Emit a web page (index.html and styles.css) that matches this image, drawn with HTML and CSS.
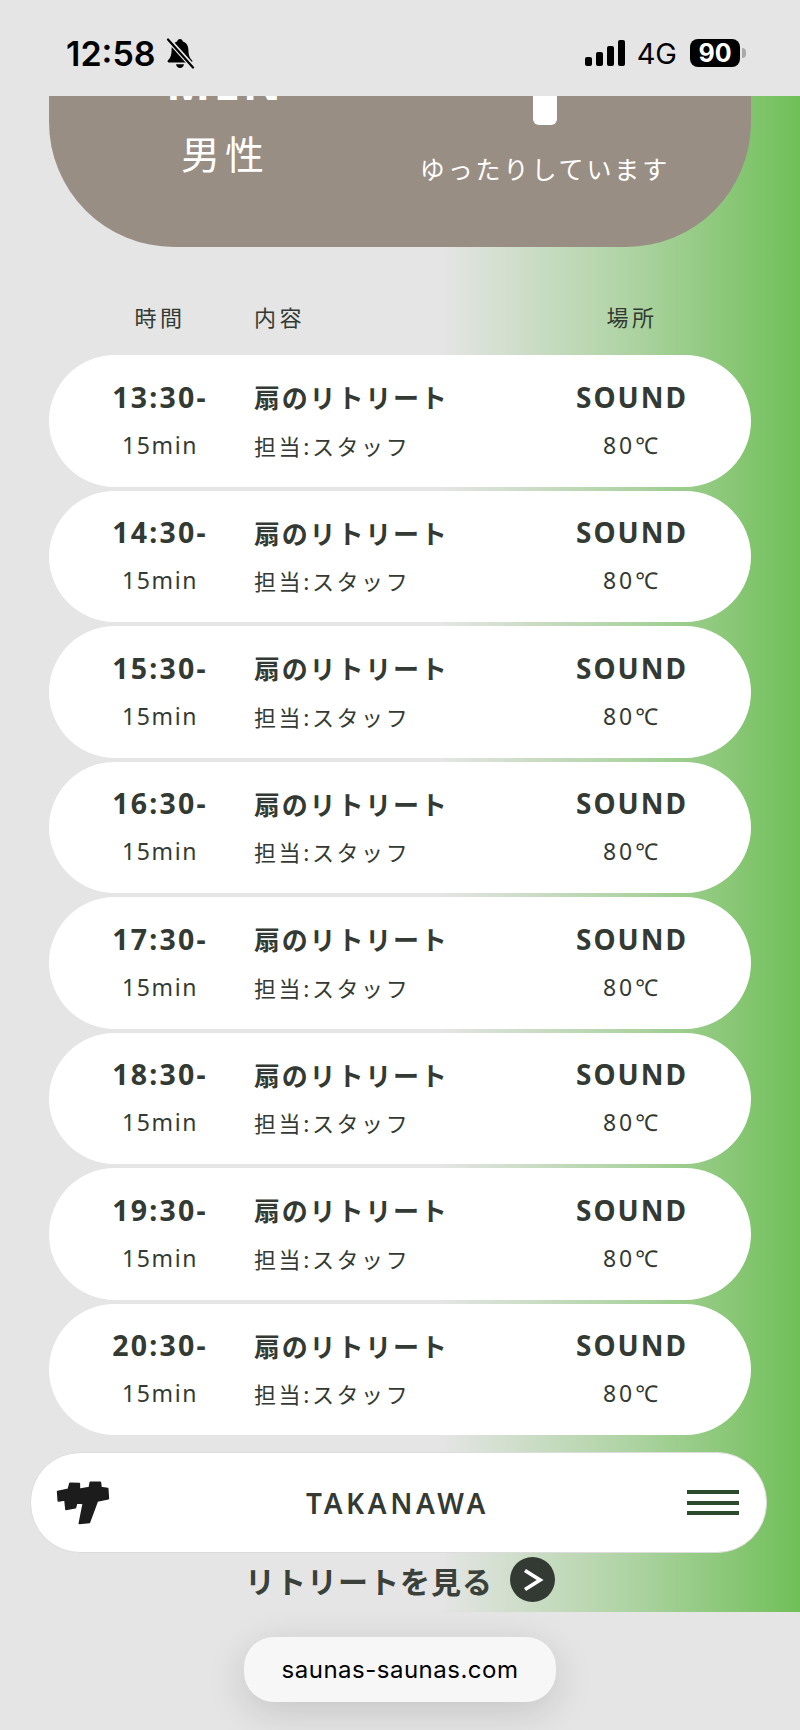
FILE: index.html
```html
<!DOCTYPE html>
<html lang="ja">
<head>
<meta charset="utf-8">
<title>TAKANAWA</title>
<link rel="stylesheet" href="styles.css">
</head>
<body>
<header class="status">
  <div class="status-left">
    <span class="clock">12:58</span>
    <svg class="bell" width="30" height="32" viewBox="0 0 30 32"><path fill="#000" d="M15 2c-1.6 0-2.6 1-2.8 2.5C8.6 5.6 6.6 8.800 6.600 13c0 4.500-.8 7.500-3.600 10.300-.9 1-.3 2.200 1 2.200h22c1.300 0 1.900-1.200 1-2.200C24.200 20.500 23.400 17.500 23.400 13c0-4.200-2-7.400-5.600-8.500C17.600 3 16.600 2 15 2z"/><path fill="#000" d="M11 27.300h8c-.3 2.200-2 3.700-4 3.700s-3.700-1.500-4-3.700z"/><path stroke="#e5e5e5" stroke-width="5" d="M2 1l26 29"/><path stroke="#000" stroke-width="2.200" stroke-linecap="round" d="M3 2.500l25 28"/></svg>
  </div>
  <div class="status-right">
    <svg class="signal" width="40" height="26" viewBox="0 0 40 26"><rect x="0" y="17" width="7" height="9" rx="2"/><rect x="11" y="12" width="7" height="14" rx="2"/><rect x="22" y="6" width="7" height="20" rx="2"/><rect x="33" y="0" width="7" height="26" rx="2"/></svg>
    <span class="net">4G</span>
    <div class="battery"><span class="level">90</span><span class="nub"></span></div>
  </div>
</header>
<main class="page">
  <section class="hero">
    <div class="hero-left">
      <div class="men">MEN</div>
      <div class="jp-men">男性</div>
    </div>
    <div class="hero-right">
      <div class="gauge"></div>
      <div class="status-text">ゆったりしています</div>
    </div>
  </section>
  <div class="columns">
    <span class="c1">時間</span><span class="c2">内容</span><span class="c3">場所</span>
  </div>
  <ul class="rows">
    <li class="row"><span class="time">13:30-</span><span class="title">扇のリトリート</span><span class="place">SOUND</span><span class="dur">15min</span><span class="staff">担当:スタッフ</span><span class="temp">80℃</span></li>
    <li class="row"><span class="time">14:30-</span><span class="title">扇のリトリート</span><span class="place">SOUND</span><span class="dur">15min</span><span class="staff">担当:スタッフ</span><span class="temp">80℃</span></li>
    <li class="row"><span class="time">15:30-</span><span class="title">扇のリトリート</span><span class="place">SOUND</span><span class="dur">15min</span><span class="staff">担当:スタッフ</span><span class="temp">80℃</span></li>
    <li class="row"><span class="time">16:30-</span><span class="title">扇のリトリート</span><span class="place">SOUND</span><span class="dur">15min</span><span class="staff">担当:スタッフ</span><span class="temp">80℃</span></li>
    <li class="row"><span class="time">17:30-</span><span class="title">扇のリトリート</span><span class="place">SOUND</span><span class="dur">15min</span><span class="staff">担当:スタッフ</span><span class="temp">80℃</span></li>
    <li class="row"><span class="time">18:30-</span><span class="title">扇のリトリート</span><span class="place">SOUND</span><span class="dur">15min</span><span class="staff">担当:スタッフ</span><span class="temp">80℃</span></li>
    <li class="row"><span class="time">19:30-</span><span class="title">扇のリトリート</span><span class="place">SOUND</span><span class="dur">15min</span><span class="staff">担当:スタッフ</span><span class="temp">80℃</span></li>
    <li class="row"><span class="time">20:30-</span><span class="title">扇のリトリート</span><span class="place">SOUND</span><span class="dur">15min</span><span class="staff">担当:スタッフ</span><span class="temp">80℃</span></li>
  </ul>
  <nav class="bar">
    <svg class="logo" width="54" height="44" viewBox="48 65 162 132"><path fill="#1c1c1c" stroke="#1c1c1c" stroke-width="5" stroke-linejoin="round" d="M53 97L85 90L90 72L118 73L118 90L148 85L151 69L181 69L183 85L203 88L205 118L172 125L148 189L118 192L130 132L110 131L106 145L78 150L75 122L55 125Z"/></svg>
    <span class="brand">TAKANAWA</span>
    <div class="burger"><span></span><span></span><span></span></div>
  </nav>
  <div class="more">
    <span class="more-text">リトリートを見る</span>
    <span class="more-btn"><svg width="22" height="24" viewBox="0 0 22 24" fill="none" stroke="#fff" stroke-width="3.800"><path d="M3 2.500l15 9.500L3 21.500"/></svg></span>
  </div>
</main>
<footer class="urlbar"><div class="url">saunas-saunas.com</div></footer>
</body>
</html>
```
FILE: styles.css
```css
* { box-sizing: border-box; }
html, body { margin: 0; padding: 0; }
body {
  width: 800px;
  height: 1730px;
  overflow: hidden;
  background: #e5e5e5;
  color: #333a33;
  font-family: "Noto Sans", "Noto Sans CJK JP", sans-serif;
}
.status {
  height: 96px;
  display: flex;
  justify-content: space-between;
  align-items: center;
  padding: 10px 54px 0 66px;
  color: #000;
  font-family: Inter, "Liberation Sans", sans-serif;
}
.status-left, .status-right { display: flex; align-items: center; }
.clock { font-size: 34px; font-weight: 600; }
.bell { margin-left: 9px; }
.signal { fill: #000; margin-right: 12px; }
.net { font-size: 29px; font-weight: 400; margin-right: 13px; }
.battery { display: flex; align-items: center; }
.level {
  width: 50px;
  height: 28px;
  border-radius: 8px;
  background: #000;
  color: #fff;
  font-size: 25px;
  font-weight: 700;
  line-height: 28px;
  text-align: center;
}
.nub { width: 4px; height: 10px; margin-left: 2px; background: #a9a9a9; border-radius: 0 4px 4px 0; }
.page {
  height: 1516px;
  background: linear-gradient(90deg, rgba(112,191,88,0) 55%, rgba(112,191,88,.45) 78%, #70bf58 100%);
  display: flex;
  flex-direction: column;
}
.hero {
  width: 702px;
  height: 151px;
  margin-left: 49px;
  flex: none;
  overflow: hidden;
  display: grid;
  grid-template-columns: 352px 288px;
  grid-template-rows: 151px;
  align-items: end;
  background: #998e84;
  border-radius: 0 0 125px 125px;
  color: #fff;
  font-family: "Noto Sans CJK JP", sans-serif;
}
.hero-left { text-align: center; padding-bottom: 70px; }
.men { font-size: 47px; font-weight: 700; line-height: 46px; letter-spacing: 3px; font-family: "Noto Sans", sans-serif; margin-bottom: 22px; }
.jp-men { font-size: 39px; letter-spacing: 5px; line-height: 50px; }
.hero-right { display: flex; flex-direction: column; align-items: center; padding-bottom: 59px; }
.gauge { width: 24px; height: 60px; background: #fff; border-radius: 6px; margin-bottom: 23px; }
.status-text { font-size: 25px; letter-spacing: 2.900px; line-height: 40px; white-space: nowrap; }
.columns, .row {
  display: grid;
  grid-template-columns: 122px 265px 160px;
  column-gap: 33px;
  padding-left: 50px;
  margin-left: 49px;
  width: 702px;
}
.columns {
  height: 108px;
  flex: none;
  align-items: center;
  font-family: "Noto Sans CJK JP", sans-serif;
  font-size: 22px;
  letter-spacing: 3.500px;
  padding-top: 29px;
}
.c1, .c3 { text-align: center; }
.rows {
  list-style: none;
  margin: 0;
  padding: 0;
  display: flex;
  flex-direction: column;
  gap: 4px;
}
.row {
  height: 131.500px;
  grid-template-rows: 48px 48px;
  align-content: center;
  align-items: center;
  background: #fff;
  border-radius: 66px;
}
.time, .place { font-size: 28.500px; font-weight: 700; letter-spacing: 2.200px; text-align: center; white-space: nowrap; }
.place { font-size: 28px; letter-spacing: 2px; }
.title { font-family: "Noto Sans CJK JP", sans-serif; font-size: 26px; font-weight: 700; letter-spacing: 1.800px; white-space: nowrap; }
.dur, .temp { font-size: 23px; letter-spacing: 1.600px; text-align: center; }
.temp { letter-spacing: 3px; }
.staff { font-family: "Noto Sans CJK JP", sans-serif; font-size: 22px; letter-spacing: 2.600px; white-space: nowrap; }
.bar {
  flex: none;
  width: 737px;
  height: 101px;
  margin: 17px 0 0 30px;
  padding: 0 27px 0 25px;
  display: flex;
  align-items: center;
  justify-content: space-between;
  background: #fff;
  border: 1px solid #dcdcdc;
  border-radius: 50px;
}
.logo { display: block; }
.brand { font-size: 28px; font-weight: 600; letter-spacing: 3.600px; margin-left: -2px; }
.burger { width: 52px; display: flex; flex-direction: column; gap: 6.500px; }
.burger span { height: 4px; background: #2c4a2c; }
.more {
  flex: none;
  display: flex;
  align-items: center;
  gap: 17px;
  margin: 4px 0 0 245px;
}
.more-text { font-family: "Noto Sans CJK JP", sans-serif; font-size: 30px; font-weight: 700; letter-spacing: 1px; color: #3a403a; }
.more-btn {
  width: 45px;
  height: 45px;
  border-radius: 50%;
  background: #333a33;
  display: flex;
  align-items: center;
  justify-content: center;
}
.urlbar { display: flex; justify-content: center; padding: 25px 0 0 0; }
.url {
  width: 312px;
  height: 65px;
  border-radius: 30px;
  background: #f7f7f7;
  box-shadow: 0 10px 40px rgba(0,0,0,.14);
  color: #000;
  font-family: Inter, "Liberation Sans", sans-serif;
  font-size: 24px;
  letter-spacing: .5px;
  line-height: 65px;
  text-align: center;
}
```
